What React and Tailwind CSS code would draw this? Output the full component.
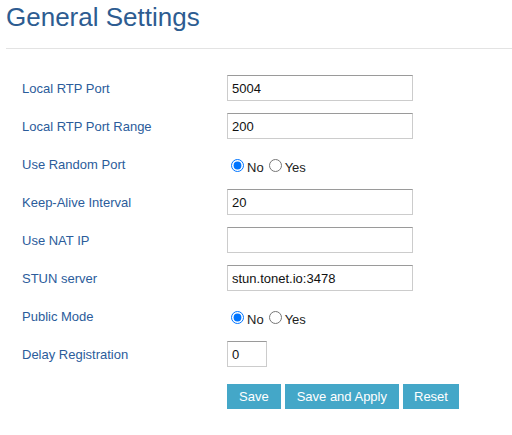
import React from 'react';

const rows = [
  { label: 'Local RTP Port', type: 'text', value: '5004' },
  { label: 'Local RTP Port Range', type: 'text', value: '200' },
  { label: 'Use Random Port', type: 'radio', name: 'random' },
  { label: 'Keep-Alive Interval', type: 'text', value: '20' },
  { label: 'Use NAT IP', type: 'text', value: '' },
  { label: 'STUN server', type: 'text', value: 'stun.tonet.io:3478' },
  { label: 'Public Mode', type: 'radio', name: 'public' },
  { label: 'Delay Registration', type: 'small', value: '0' },
];

const inputCls =
  'h-[26px] border border-[#cccccc] border-t-[#9a9a9a] pl-[4px] text-[13px] text-[#111] outline-none bg-white';

function Field({ row }) {
  if (row.type === 'radio') {
    return (
      <div className="pt-[2px] text-[13px] leading-[15px] text-[#222]">
        <input type="radio" name={row.name} defaultChecked className="ml-[4px] mr-[3px] mt-[3px] align-baseline" />
        No
        <input type="radio" name={row.name} className="ml-[5px] mr-[3px] mt-[3px] align-baseline" />
        Yes
      </div>
    );
  }
  if (row.type === 'small') {
    return <input type="text" defaultValue={row.value} className={`${inputCls} w-[40px]`} />;
  }
  return <input type="text" defaultValue={row.value} className={`${inputCls} w-[186px]`} />;
}

export default function App() {
  return (
    <div className="w-[512px] h-[435px] bg-white font-['Liberation_Sans',Arial,sans-serif]">
      {/* Header */}
      <h1 className="pl-[6px] pt-[2px] text-[26px] leading-[30px] text-[#2d5c91]">General Settings</h1>
      <div className="ml-[6px] mt-[16px] h-px bg-[#e3e3e3]" />

      {/* Form rows */}
      <div className="mt-[20px] pl-[22px]">
        {rows.map((row) => (
          <div key={row.label} className="flex h-[38px] items-center">
            <div className="w-[205px] pt-[2px] text-[13px] leading-[36px] text-[#2b5c9b]">{row.label}</div>
            <Field row={row} />
          </div>
        ))}

        <div className="ml-[205px] mt-[11px] flex gap-[4px]">
          <button className="h-[25px] bg-[#44a7c8] px-[12px] text-[13px] text-white">Save</button>
          <button className="h-[25px] bg-[#44a7c8] px-[12px] text-[13px] text-white">Save and Apply</button>
          <button className="h-[25px] bg-[#44a7c8] px-[11px] text-[13px] text-white">Reset</button>
        </div>
      </div>
    </div>
  );
}
